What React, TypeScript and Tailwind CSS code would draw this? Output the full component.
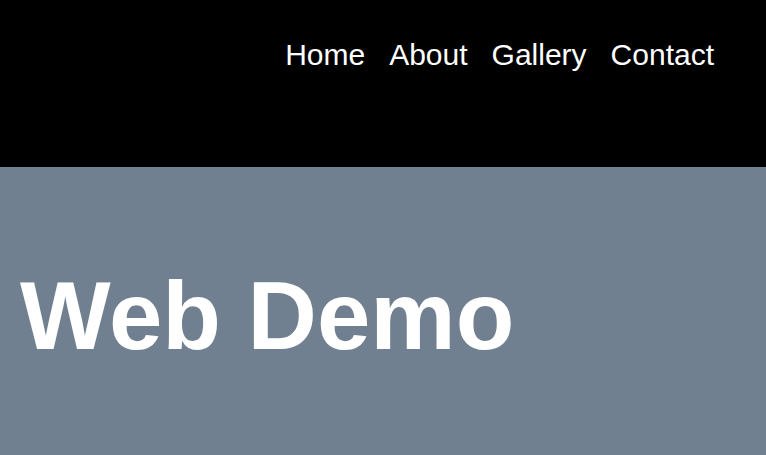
export default function App() {
  const links = ["Home", "About", "Gallery", "Contact"];
  return (
    <div className="min-h-[455px] bg-[#708090] font-['Liberation_Sans',Arial,sans-serif]">
      <header className="h-[167px] bg-black">
        <nav className="flex justify-end gap-[24px] pr-[52px] pt-[36px]">
          {links.map((l) => (
            <a key={l} href="#" className="text-[30px] leading-[38px] text-white">
              {l}
            </a>
          ))}
        </nav>
      </header>
      <main className="px-[20px] pt-[94px]">
        <h1 className="text-[96px] font-bold leading-[110px] text-white">Web Demo</h1>
      </main>
    </div>
  );
}
